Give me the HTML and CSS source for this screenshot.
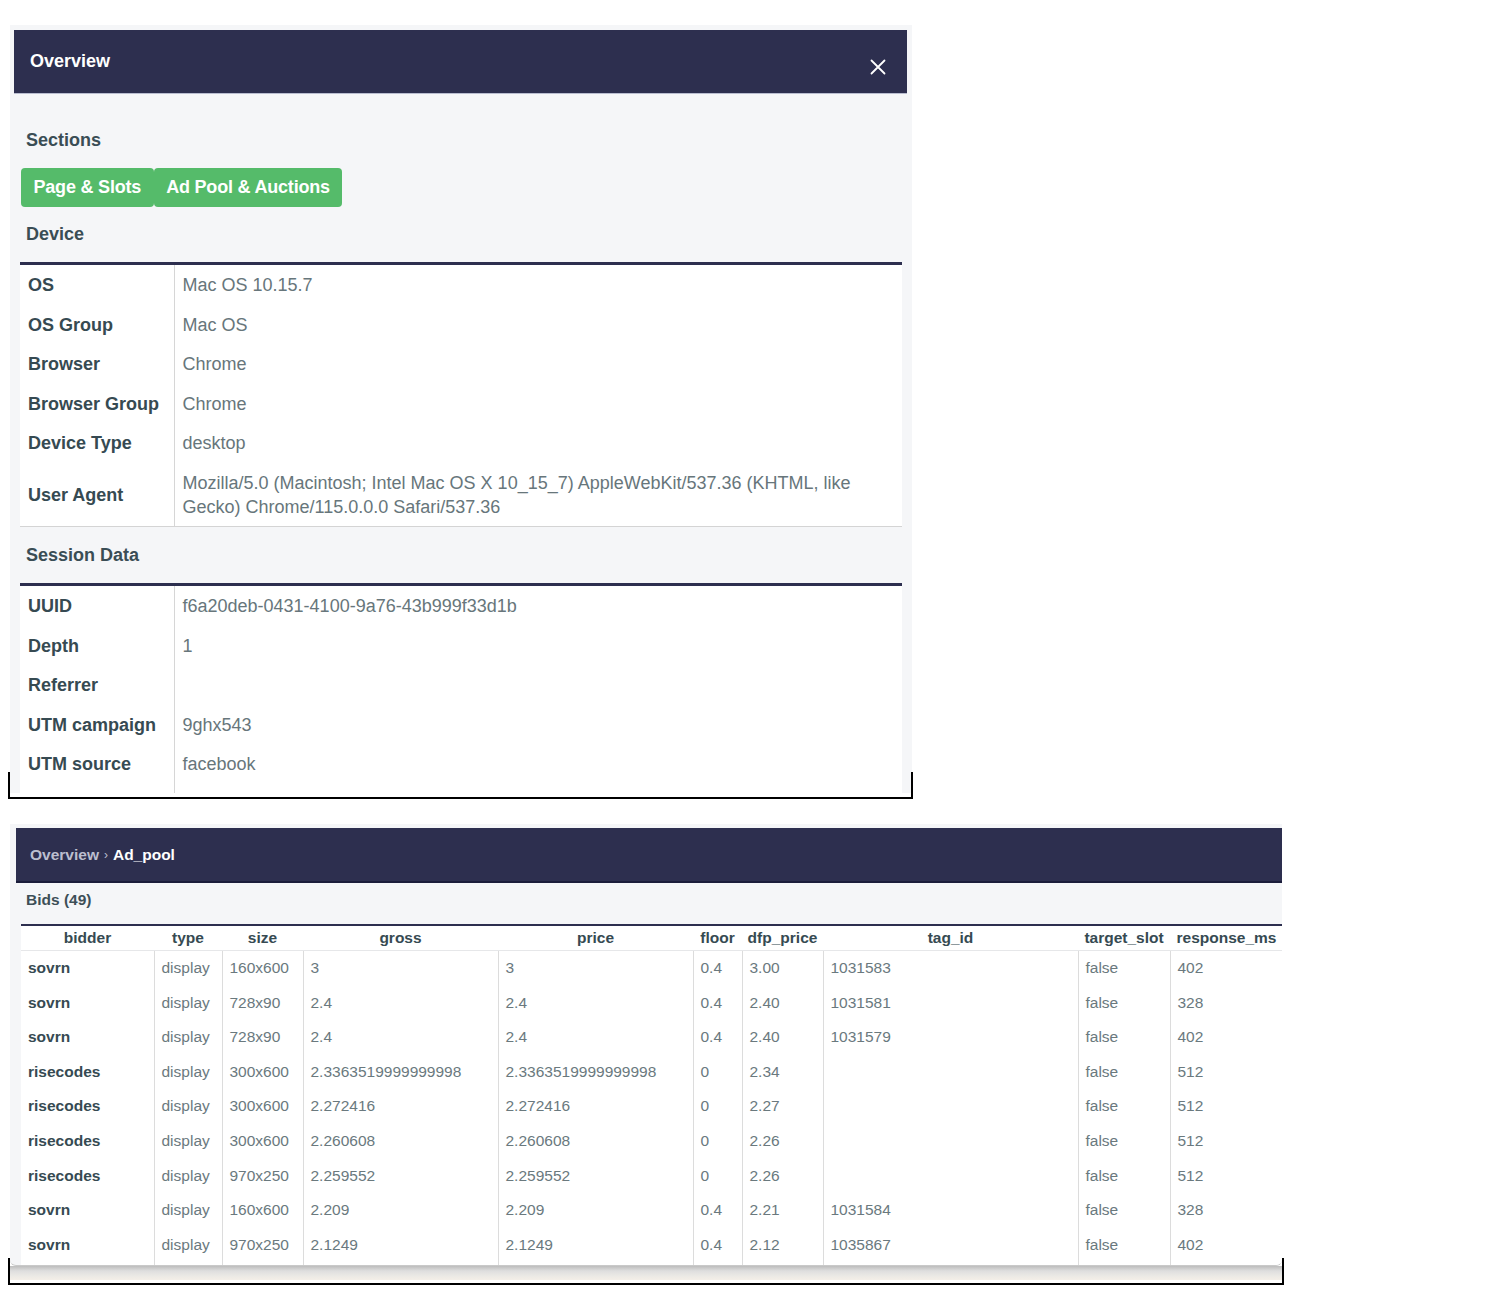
FILE: index.html
```html
<!DOCTYPE html>
<html lang="en">
    <head>
        <meta charset="UTF-8">
        <meta name="viewport" content="width=device-width, initial-scale=1.0">
        <title>Overview</title>
        <link rel="stylesheet" href="styles.css">
    </head>
    <body>
        <div class="shot shot-overview">
            <div class="panel">
                <div class="panel-header">
                    <span class="panel-title">Overview</span>
                    <button class="close" aria-label="Close">
                        <svg width="16" height="16" viewBox="0 0 16 16"><path d="M1.5 1.5 L14.5 14.5 M14.5 1.5 L1.5 14.5" stroke="#fff" stroke-width="1.8" stroke-linecap="round"/></svg>
                    </button>
                </div>
                <div class="panel-body">
                    <h3 class="section-title">Sections</h3>
                    <div class="section-links">
                        <a class="btn-section">Page &amp; Slots</a>
                        <a class="btn-section">Ad Pool &amp; Auctions</a>
                    </div>

                    <h3 class="section-title section-title-sm">Device</h3>
                    <table class="kv-table">
                        <tr><td class="key">OS</td><td class="val">Mac OS 10.15.7</td></tr>
                        <tr><td class="key">OS Group</td><td class="val">Mac OS</td></tr>
                        <tr><td class="key">Browser</td><td class="val">Chrome</td></tr>
                        <tr><td class="key">Browser Group</td><td class="val">Chrome</td></tr>
                        <tr><td class="key">Device Type</td><td class="val">desktop</td></tr>
                        <tr class="last"><td class="key">User Agent</td><td class="val">Mozilla/5.0 (Macintosh; Intel Mac OS X 10_15_7) AppleWebKit/537.36 (KHTML, like Gecko) Chrome/115.0.0.0 Safari/537.36</td></tr>
                    </table>

                    <h3 class="section-title section-title-sm">Session Data</h3>
                    <table class="kv-table">
                        <tr><td class="key">UUID</td><td class="val">f6a20deb-0431-4100-9a76-43b999f33d1b</td></tr>
                        <tr><td class="key">Depth</td><td class="val">1</td></tr>
                        <tr><td class="key">Referrer</td><td class="val"></td></tr>
                        <tr><td class="key">UTM campaign</td><td class="val">9ghx543</td></tr>
                        <tr><td class="key">UTM source</td><td class="val">facebook</td></tr>
                        <tr class="spacer"><td class="key"></td><td class="val"></td></tr>
                    </table>
                </div>
            </div>
        </div>

        <div class="shot shot-pool">
            <div class="panel">
                <div class="panel-header">
                    <span class="crumb">Overview</span>
                    <span class="crumb-sep">›</span>
                    <span class="crumb-current">Ad_pool</span>
                </div>
                <h4 class="bids-title">Bids (49)</h4>
                <table class="bids">
                    <colgroup>
                        <col style="width:133px"><col style="width:68px"><col style="width:81px">
                        <col style="width:195px"><col style="width:195px"><col style="width:49px">
                        <col style="width:81px"><col style="width:255px"><col style="width:92px">
                        <col style="width:113px">
                    </colgroup>
                    <thead>
                        <tr>
                            <th>bidder</th><th>type</th><th>size</th><th>gross</th><th>price</th>
                            <th>floor</th><th>dfp_price</th><th>tag_id</th><th>target_slot</th><th>response_ms</th>
                        </tr>
                    </thead>
                    <tbody>
                        <tr><td>sovrn</td><td>display</td><td>160x600</td><td>3</td><td>3</td><td>0.4</td><td>3.00</td><td>1031583</td><td>false</td><td>402</td></tr>
                        <tr><td>sovrn</td><td>display</td><td>728x90</td><td>2.4</td><td>2.4</td><td>0.4</td><td>2.40</td><td>1031581</td><td>false</td><td>328</td></tr>
                        <tr><td>sovrn</td><td>display</td><td>728x90</td><td>2.4</td><td>2.4</td><td>0.4</td><td>2.40</td><td>1031579</td><td>false</td><td>402</td></tr>
                        <tr><td>risecodes</td><td>display</td><td>300x600</td><td>2.3363519999999998</td><td>2.3363519999999998</td><td>0</td><td>2.34</td><td></td><td>false</td><td>512</td></tr>
                        <tr><td>risecodes</td><td>display</td><td>300x600</td><td>2.272416</td><td>2.272416</td><td>0</td><td>2.27</td><td></td><td>false</td><td>512</td></tr>
                        <tr><td>risecodes</td><td>display</td><td>300x600</td><td>2.260608</td><td>2.260608</td><td>0</td><td>2.26</td><td></td><td>false</td><td>512</td></tr>
                        <tr><td>risecodes</td><td>display</td><td>970x250</td><td>2.259552</td><td>2.259552</td><td>0</td><td>2.26</td><td></td><td>false</td><td>512</td></tr>
                        <tr><td>sovrn</td><td>display</td><td>160x600</td><td>2.209</td><td>2.209</td><td>0.4</td><td>2.21</td><td>1031584</td><td>false</td><td>328</td></tr>
                        <tr><td>sovrn</td><td>display</td><td>970x250</td><td>2.1249</td><td>2.1249</td><td>0.4</td><td>2.12</td><td>1035867</td><td>false</td><td>402</td></tr>
                        <tr class="spacer"><td></td><td></td><td></td><td></td><td></td><td></td><td></td><td></td><td></td><td></td></tr>
                    </tbody>
                </table>
            </div>
            <div class="window-edge"></div>
        </div>
    </body>
</html>
```

FILE: styles.css
```css
*,
*::before,
*::after {
    box-sizing: border-box;
}

body {
    margin: 0;
    padding: 0;
    background-color: #fff;
    font-family: "Liberation Sans", Helvetica, Arial, sans-serif;
    color: #364a52;
}

/* screenshot frames */
.shot {
    position: relative;
    margin-left: 8px;
}

.shot::after {
    content: '';
    position: absolute;
    left: 0;
    right: 0;
    bottom: 0;
    height: 27px;
    border: 2px solid #000;
    border-top: none;
}

.shot-overview {
    width: 905px;
    padding: 25px 0 6px;
}

.shot-pool {
    width: 1276px;
    margin-top: 25px;
    padding-bottom: 5px;
}

.panel {
    margin-left: 2px;
    background-color: #f5f6f8;
    overflow: hidden;
}

.shot-overview .panel {
    width: 902px;
    height: 768px;
}

.shot-pool .panel {
    width: 1272px;
    height: 442px;
    border-radius: 0 0 6px 6px;
    border-bottom: 1px solid #c9c9c9;
}

.panel-header {
    display: flex;
    align-items: center;
    background-color: #2d2f4f;
    color: #fff;
}

.shot-overview .panel-header {
    justify-content: space-between;
    height: 64px;
    margin: 5px 5px 0 4px;
    padding: 0 21px 0 16px;
    border-bottom: 1px solid #b9bdd0;
}

.panel-title {
    font-size: 18px;
    font-weight: bold;
}

.close {
    margin-top: 10px;
    padding: 0;
    border: none;
    background: none;
    line-height: 0;
    cursor: pointer;
}

.panel-body {
    padding: 0 10px;
}

.section-title {
    margin: 34px 0 0;
    padding-left: 6px;
    font-size: 18px;
    line-height: 24px;
    font-weight: bold;
    color: #3a4d55;
}

.section-title-sm {
    margin-top: 15px;
}

.kv-table + .section-title-sm {
    margin-top: 16px;
}

.section-links {
    display: flex;
    margin: 16px 0 0 1px;
}

.btn-section {
    height: 39px;
    padding: 0 12.5px;
    line-height: 39px;
    font-size: 18px;
    font-weight: bold;
    letter-spacing: -0.2px;
    color: #fff;
    background-color: #55bb6a;
    border-radius: 4px;
    cursor: pointer;
}

.kv-table {
    width: 100%;
    margin-top: 16px;
    border-collapse: collapse;
    border-top: 3px solid #2d2f4f;
    background-color: #fff;
    font-size: 18px;
    line-height: 24px;
}

.kv-table td {
    padding: 8px 8px 7.5px;
    vertical-align: middle;
}

.kv-table .key {
    width: 154px;
    border-right: 1px solid #d6d6d6;
    font-weight: bold;
    color: #364a52;
    white-space: nowrap;
}

.kv-table .val {
    color: #67767b;
}

.kv-table tr.last td {
    border-bottom: 1px solid #d4d4d4;
}

/* ad pool */
.shot-pool .panel-header {
    height: 55px;
    margin: 4px 0 0 6px;
    padding-left: 14px;
    border-bottom: 2px solid #1b1d3b;
    font-size: 15.5px;
    font-weight: bold;
}

.crumb {
    color: #bcbfcf;
}

.crumb-sep {
    margin: 0 5px;
    font-size: 12px;
    font-weight: normal;
    color: #bcbfcf;
}

.bids-title {
    margin: 0;
    padding: 7px 0 0 16px;
    font-size: 15.5px;
    line-height: 20px;
    font-weight: bold;
    color: #3d4f57;
}

.bids {
    table-layout: fixed;
    width: 1262px;
    margin: 14px 0 0 11px;
    border-collapse: collapse;
    border-top: 2px solid #2d2f4f;
    background-color: #fff;
    font-size: 15.5px;
}

.bids th {
    padding: 3px 0;
    line-height: 18px;
    font-weight: bold;
    color: #364a52;
    text-align: center;
    white-space: nowrap;
    border-bottom: 1px solid #e6e7e9;
}

.bids td {
    padding: 8px 7px;
    line-height: 18.6px;
    color: #6a797e;
    border-left: 1px solid #dcdcdc;
    white-space: nowrap;
}

.bids td:first-child {
    border-left: none;
    font-weight: bold;
    color: #364a52;
}

.window-edge {
    width: 1272px;
    height: 14px;
    margin-left: 2px;
    background-image: linear-gradient(#bdbdbd 0%, #dedede 35%, #ebe9e5 70%, #f4efe8 100%);
}
```
